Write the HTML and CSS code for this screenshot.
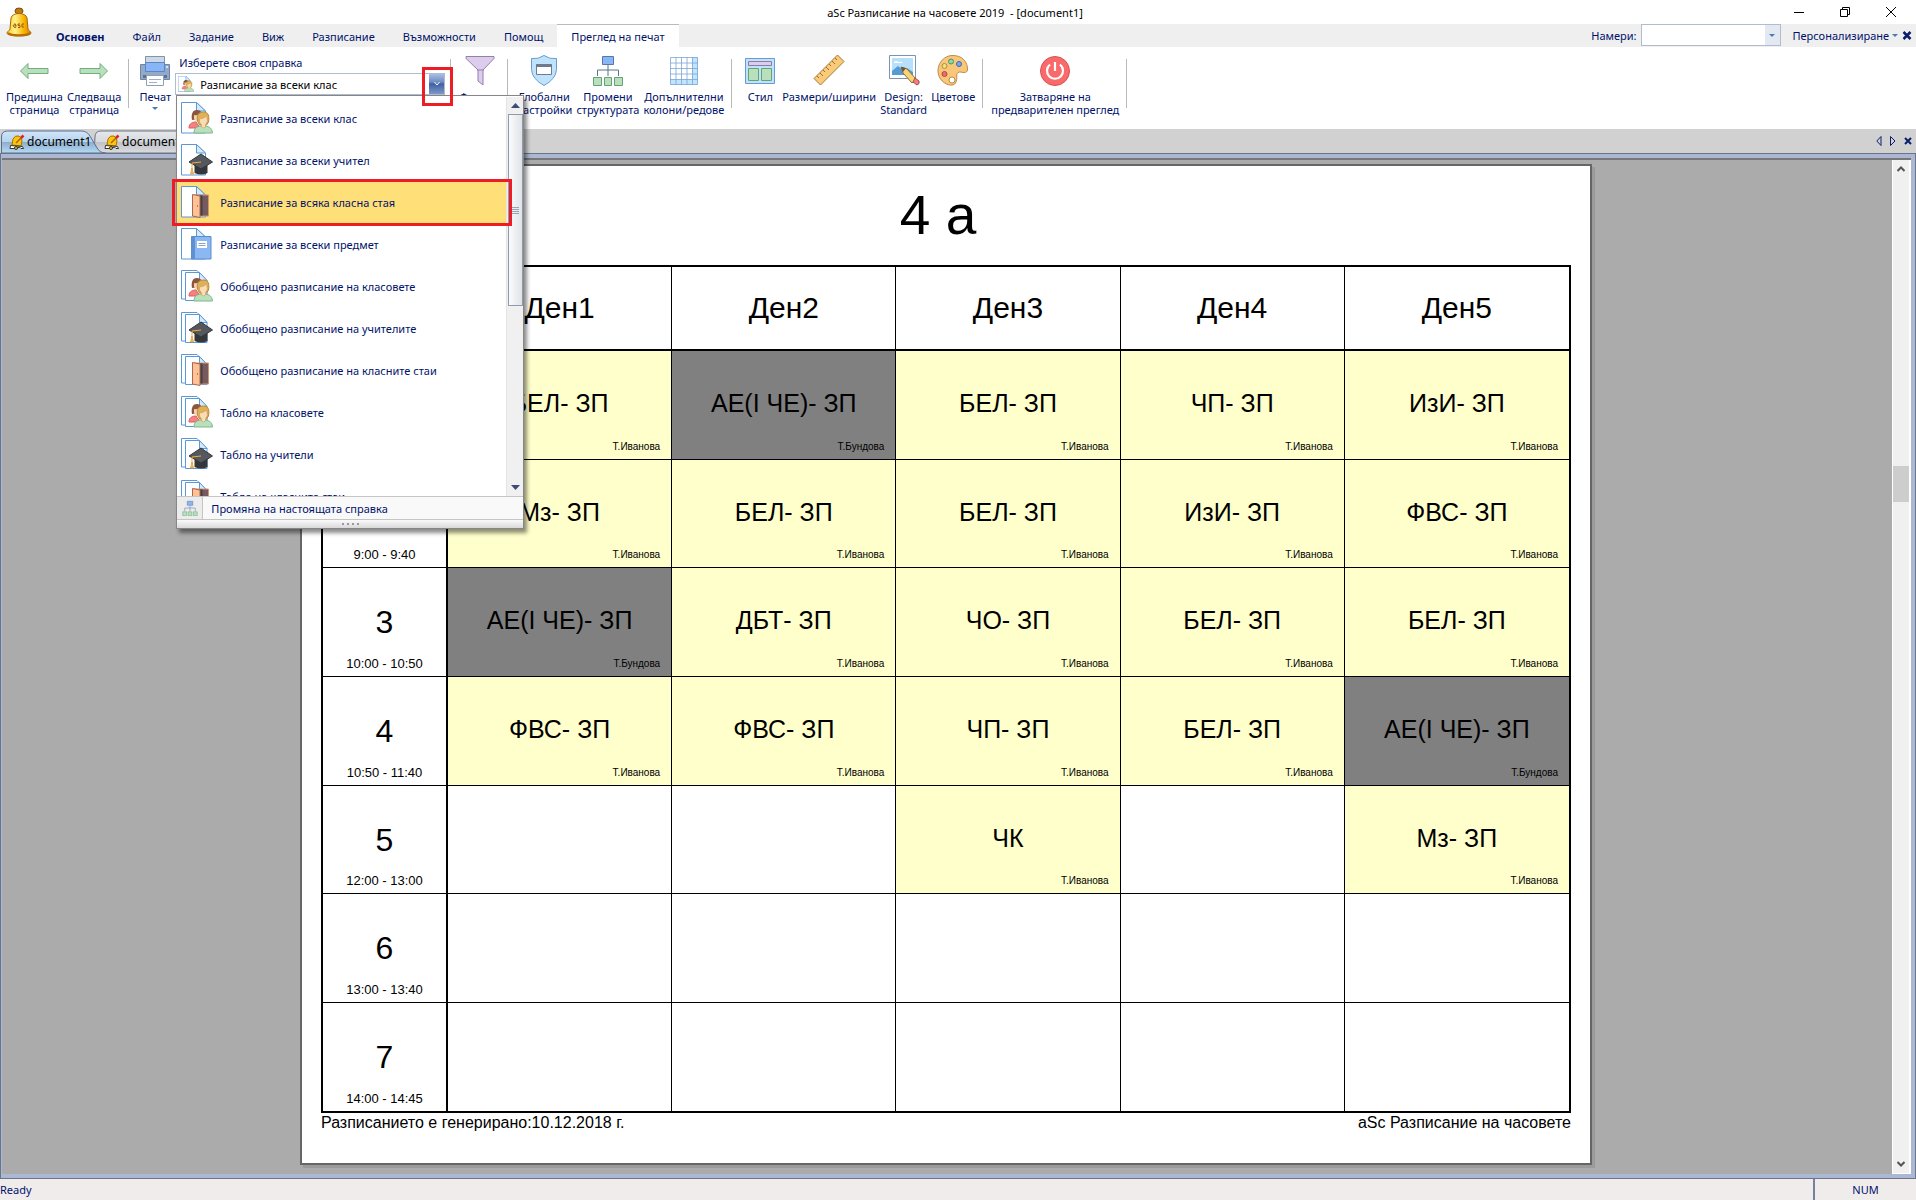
FILE: index.html
```html
<!DOCTYPE html>
<html lang="bg">
<head>
<meta charset="utf-8">
<title>aSc Разписание на часовете 2019 - [document1]</title>
<link rel="stylesheet" href="styles.css">
</head>
<body>
<svg class="sprite" aria-hidden="true">
  <defs>
    <linearGradient id="gold" x1="0" x2="1"><stop offset="0" stop-color="#ffd21c"/><stop offset=".35" stop-color="#fff08a"/><stop offset=".7" stop-color="#f7b500"/><stop offset="1" stop-color="#d88400"/></linearGradient>
  </defs>
  <symbol id="bell" viewBox="0 0 26 30">
    <ellipse cx="13" cy="4" rx="4" ry="3" fill="#c07a10" stroke="#7a4a08"/>
    <path d="M5 11C6 5 20 5 21 11l1 11c0 2 3 2 3 4 0 4-24 4-24 0 0-2 3-2 3-4z" fill="url(#gold)" stroke="#a86606"/>
    <path d="M2 26c3 3 19 3 22 0" fill="none" stroke="#b86c04" stroke-width="2"/>
    <path d="M8 17q2-1 2 2t-2 1 0-2h2M14 17h-2v1.500h2v2h-2M18 17h-2v3h2" fill="none" stroke="#9a5a10"/>
  </symbol>
  <symbol id="bellpen" viewBox="0 0 16 16">
    <path d="M3 11l1-6q2-4 6-3 3 2 3 5l-1 5z" fill="#fbc50c" stroke="#a87000"/>
    <path d="M1.500 11.500l12 1 1 2H12q-1-2-3-1-3 0-4 1H1z" fill="#fff" stroke="#333"/>
    <circle cx="7" cy="14" r="1.500" fill="#fbc50c" stroke="#333"/>
    <path d="M7 9l5-5" stroke="#b06010" stroke-width="1.500"/><path d="M12 4l2.500-2.500" stroke="#e8201c" stroke-width="2.500"/>
  </symbol>
  <symbol id="page" viewBox="0 0 32 32">
    <path d="M1 .5h14.500L24.500 9v22H.500V.500z" fill="#fff" stroke="#5b98d6"/>
    <path d="M15.500.500V9h9z" fill="#d5ebfd" stroke="#5b98d6"/>
  </symbol>
  <symbol id="pages" viewBox="0 0 32 32">
    <path d="M.5.500H16l5 5V29H.500z" fill="#fff" stroke="#5b98d6"/>
    <path d="M4.500 2.500H18.500l7.500 8v20H4.500z" fill="#fff" stroke="#5b98d6"/>
    <path d="M18.500 2.500v8H26z" fill="#d5ebfd" stroke="#5b98d6"/>
  </symbol>
  <symbol id="people" viewBox="0 0 32 32">
    <path d="M8 26c0-5 4-6 7-6l4 6z" fill="#f98080" stroke="#d86060"/>
    <path d="M11 18c-1-5 0-10 5-10 4 0 6 3 5 9z" fill="#8a5640"/>
    <path d="M13 13q3 1 5-1l1 5-3 3-3-3z" fill="#f5d3ae"/>
    <path d="M13 31c0-6 4-7 9-7s9 1 9.500 7z" fill="#b9dfbd" stroke="#7fb889"/>
    <path d="M16.500 19c-1-6 1-9 6-9s6 4 5 10l-2 3h-7z" fill="#e0b055" stroke="#b98a3c"/>
    <path d="M18.500 17q4 0 7-3l1 5-2 4v2q-2 2-4 0v-2l-2-3z" fill="#fadcb6" stroke="#c79a5a" stroke-width=".6"/>
  </symbol>
  <symbol id="cap" viewBox="0 0 32 32">
    <path d="M13.500 18h13v11q-6 3-13 0z" fill="#33363b"/>
    <path d="M20 10l11.500 8L20 25 8 18z" fill="#55585d" stroke="#33363b"/>
    <path d="M20 18l-9 1v7" fill="none" stroke="#f2ab3c"/><path d="M11 24l-1.500 6h3z" fill="#f7b955" stroke="#d99022" stroke-width=".6"/>
  </symbol>
  <symbol id="door" viewBox="0 0 32 32">
    <path d="M12 9h15.500v21H12z" fill="#765a5e" stroke="#cf9670"/>
    <path d="M19 9.500h2.500v20H19z" fill="#473f43"/>
    <path d="M11.500 8.500L19 10v21.500l-7.500-1.500z" fill="#ffc198" stroke="#a86a4a"/><path d="M16.500 19v2" stroke="#c57545"/>
  </symbol>
  <symbol id="book" viewBox="0 0 32 32">
    <path d="M10.500 8.500h19.500v22.500H10.500z" fill="#8bb8f2" stroke="#5a8ccb"/><path d="M10.500 8.500H14v22.500h-3.500z" fill="#5e91d2"/>
    <path d="M16 13h10v7H16z" fill="#fff" /><path d="M17.500 15.500h7M17.500 17.500h7" stroke="#8aa6c8"/>
  </symbol>
  <symbol id="org" viewBox="0 0 32 32">
    <path d="M16 11v5M5.500 22v-6h21v6M16 16v6" fill="none" stroke="#5d7290"/>
    <path d="M10.500 2.500h11v8h-11z" fill="#8ab6f5" stroke="#5377ae"/>
    <path d="M1.500 23.500h8v8h-8zM12.500 23.500h7v8h-7zM22.500 23.500h8v8h-8z" fill="#b9dfbd" stroke="#63a477"/>
  </symbol>
</svg>

<div class="app">
  <header class="titlebar">
    <svg class="logo"><use href="#bell"/></svg>
    <h1 class="title">aSc Разписание на часовете 2019 &nbsp;- [document1]</h1>
    <div class="winctl">
      <button aria-label="Minimize"><svg viewBox="0 0 12 12"><path d="M1 6.500h10"/></svg></button>
      <button aria-label="Restore"><svg viewBox="0 0 12 12"><path d="M1.500 3.500h7v7h-7zM3.500 3V1.500h7v7H9"/></svg></button>
      <button aria-label="Close"><svg viewBox="0 0 12 12"><path d="M1 1l10 10M11 1L1 11"/></svg></button>
    </div>
  </header>

  <nav class="menubar">
    <button class="main">Основен</button><button>Файл</button><button>Задание</button><button>Виж</button><button>Разписание</button><button>Възможности</button><button>Помощ</button><button class="active">Преглед на печат</button>
    <div class="tools">
      <label for="find">Намери:</label>
      <span class="find"><input id="find" type="text"><button aria-label="Търсене"><i class="tri"></i></button></span>
      <button class="customize">Персонализиране <i class="tri"></i></button>
      <button class="closedoc" aria-label="Затвори"><svg viewBox="0 0 10 9"><path d="M1.500 1l7 7M8.500 1l-7 7" stroke="#0a1f6b" stroke-width="2.500"/></svg></button>
    </div>
  </nav>

  <div class="ribbon">
    <button class="tool"><svg viewBox="0 0 32 32"><path d="M2.500 17L10 9.500v5h20v5H10v5z" fill="#b9dfbd" stroke="#6fae7f"/></svg>Предишна<br>страница</button>
    <button class="tool"><svg viewBox="0 0 32 32"><path d="M29.500 17L22 9.500v5H2v5h20v5z" fill="#b9dfbd" stroke="#6fae7f"/></svg>Следваща<br>страница</button>
    <i class="sep"></i>
    <button class="tool"><svg viewBox="0 0 32 32"><path d="M6.500 2.500h19v8h-19z" fill="#ccd8e5" stroke="#7f93ab"/><path d="M1.500 10.500h29v15h-29z" fill="#93a9c6" stroke="#6c86a8"/><path d="M6.500 8.500h19v9h-19z" fill="#87b5f5" stroke="#5a86c8"/><circle cx="28" cy="13" r="1" fill="#eaf3ff"/><path d="M4 21h24v3H4z" fill="#5c7494"/><path d="M7.500 21.500h17v10h-17z" fill="#fff" stroke="#8fa0b5"/><path d="M10 25.500h12M10 28.500h8" stroke="#9eb0c6"/></svg>Печат<i class="tri"></i></button>
    <div class="report">
      <label for="report">Изберете своя справка</label>
      <div class="combo">
        <svg class="comboicon"><use href="#page"/><use href="#people"/></svg>
        <select id="report"><option>Разписание за всеки клас</option><option>Разписание за всеки учител</option></select>
        <span class="drop"><svg viewBox="0 0 8 6"><path d="M1.500 1L4 4l2.500-3" fill="none" stroke="#fff"/></svg></span>
        <div class="mark markdrop"></div>
        <div class="popup">
          <div class="list">
            <ul>
              <li><button><svg><use href="#page"/><use href="#people"/></svg>Разписание за всеки клас</button></li>
              <li><button><svg><use href="#page"/><use href="#cap"/></svg>Разписание за всеки учител</button></li>
              <li><button class="on"><svg><use href="#page"/><use href="#door"/></svg>Разписание за всяка класна стая</button><div class="mark markitem"></div></li>
              <li><button><svg><use href="#page"/><use href="#book"/></svg>Разписание за всеки предмет</button></li>
              <li><button><svg><use href="#pages"/><use href="#people"/></svg>Обобщено разписание на класовете</button></li>
              <li><button><svg><use href="#pages"/><use href="#cap"/></svg>Обобщено разписание на учителите</button></li>
              <li><button><svg><use href="#pages"/><use href="#door"/></svg>Обобщено разписание на класните стаи</button></li>
              <li><button><svg><use href="#pages"/><use href="#people"/></svg>Табло на класовете</button></li>
              <li><button><svg><use href="#pages"/><use href="#cap"/></svg>Табло на учители</button></li>
              <li class="cut"><button><svg><use href="#pages"/><use href="#door"/></svg>Табло на класните стаи</button></li>
            </ul>
            <div class="bar">
              <svg viewBox="0 0 9 5"><path d="M4.500 0L9 5H0z" fill="#3c4c78"/></svg>
              <div class="thumb"><i></i></div>
              <svg viewBox="0 0 9 5"><path d="M4.500 5L0 0h9z" fill="#3c4c78"/></svg>
            </div>
          </div>
          <button class="change"><span><svg viewBox="0 0 32 32"><use href="#org"/></svg></span>Промяна на настоящата справка</button>
          <div class="grip"><i></i><i></i><i></i><i></i></div>
        </div>
      </div>
    </div>
    <i class="sep"></i>
    <button class="tool"><svg viewBox="0 0 32 32"><path d="M2 2.500h28v2L19 16v15l-5-4V16L2 4.500z" fill="#dccdec" stroke="#957fae"/><path d="M13 16h7" stroke="#957fae"/></svg>Филтър</button>
    <i class="sep"></i>
    <button class="tool"><svg viewBox="0 0 32 32"><path d="M16 1.500q6 4 12.500 3v11Q28 25 16 31.500 4 25 3.500 15.500v-11q6.500 1 12.500-3z" fill="#bfe3fb" stroke="#6a9bd0"/><path d="M8.500 10.500h15v10h-15z" fill="#fff" stroke="#6d7b8c"/><path d="M8.500 10h15v3h-15z" fill="#6d7b8c"/></svg>Глобални<br>настройки</button>
    <button class="tool"><svg><use href="#org"/></svg>Промени<br>структурата</button>
    <button class="tool"><svg viewBox="0 0 32 32"><path d="M2.500 3.500h27v27h-27z" fill="#fff"/><path d="M24 3h6v28H2v-6h22z" fill="#bfe5ff"/><path d="M2.500 3.500h27v27h-27zM8 3v28M13.500 3v28M19 3v28M24.500 3v28M2 9h28M2 14.500h28M2 20h28M2 25.500h28" fill="none" stroke="#7fa5d8" stroke-width=".8"/></svg>Допълнителни<br>колони/редове</button>
    <i class="sep wide"></i>
    <button class="tool"><svg viewBox="0 0 32 32"><path d="M1.500 4.500h29v25h-29z" fill="#bfe3fb" stroke="#6a9bd0"/><path d="M4.500 7.500h23v4h-23z" fill="#dccdec" stroke="#8d78ac"/><path d="M4.500 14.500h10v12h-10zM17.500 14.500h10v12h-10z" fill="#b9dfbd" stroke="#63a477"/></svg>Стил</button>
    <button class="tool"><svg viewBox="0 0 32 32"><path d="M24.500 1L31 7.500 7.500 31 1 24.500z" fill="#f8ca7a" stroke="#a87a3a"/><path d="M4 22l2 2M7 19l3 3M10 16l2 2M13 13l3 3M16 10l2 2M19 7l3 3M22 4l2 2" stroke="#a06a30"/></svg>Размери/ширини</button>
    <button class="tool"><svg viewBox="0 0 32 32"><path d="M1.500 1.500h26v23h-26z" fill="#fff" stroke="#7c93b3"/><path d="M4 4h21v17H4z" fill="#b7e0fb"/><path d="M4 17l6-5 5 4 4-2 6 4v3H4z" fill="#569bd8"/><path d="M6 8q2-2 4 0 3-1 5 1H6z" fill="#fff"/><path d="M13 13l6 2 9 10-4 4-9-10z" fill="#f9d577" stroke="#8e6e2e"/><path d="M13 13l5 1-3 4z" fill="#6b5440"/><path d="M27 24l4 3q1 3-2 4l-4-3z" fill="#f08080" stroke="#a64a4a"/></svg>Design:<br>Standard</button>
    <button class="tool"><svg viewBox="0 0 32 32"><path d="M15 1.500C25 1 31 8 30.500 16c-1 4-5 2-8 2-5 1-1 6-4 11-2 4-11 2-15-4C-3 15 4 2 15 1.500z" fill="#f8c77a" stroke="#c08a48"/><circle cx="14" cy="7.500" r="2.500" fill="#8fd6a3" stroke="#4b9465"/><circle cx="22" cy="10" r="2.500" fill="#78a8f0" stroke="#4169ab"/><circle cx="7.500" cy="12" r="2.500" fill="#f5e07e" stroke="#a8903c"/><circle cx="7.500" cy="20" r="2.500" fill="#f06b6b" stroke="#b84444"/><circle cx="15" cy="26" r="3" fill="#fff" stroke="#c08a48"/></svg>Цветове</button>
    <i class="sep"></i>
    <button class="tool"><svg viewBox="0 0 32 32"><circle cx="16" cy="17" r="14.500" fill="#f96b6b" stroke="#d94f52"/><path d="M11 10.500a8 8 0 1 0 10 0M16 8v9" fill="none" stroke="#fff" stroke-width="2.200"/></svg>Затваряне на<br>предварителен преглед</button>
    <i class="sep"></i>
  </div>

  <div class="doctabs">
    <svg class="shape" viewBox="0 0 260 24">
      <defs>
        <linearGradient id="ta" y2="1" x2="0"><stop offset="0" stop-color="#d3e4f8"/><stop offset=".5" stop-color="#b4d3ef"/><stop offset=".52" stop-color="#8fadcb"/><stop offset="1" stop-color="#b5dcf5"/></linearGradient>
        <linearGradient id="tb" y2="1" x2="0"><stop offset="0" stop-color="#e6e8ec"/><stop offset=".5" stop-color="#d5d8dc"/><stop offset=".52" stop-color="#bfc2c7"/><stop offset="1" stop-color="#dadcdf"/></linearGradient>
      </defs>
      <path d="M90 24q5-4 5-16 0-6 6-6h76q6 0 8 4l10 18z" fill="url(#tb)" stroke="#6d7480"/>
      <path d="M1.500 24V8q0-6 6-6h74q6 0 9 6l6 10q3 6 9 6z" fill="url(#ta)" stroke="#55708f"/>
    </svg>
    <button><svg><use href="#bellpen"/></svg>document1</button>
    <button><svg><use href="#bellpen"/></svg>document2</button>
    <div class="tabctl">
      <button aria-label="Предишен"><svg viewBox="0 0 6 10"><path d="M5 .5v9L.800 5z"/></svg></button>
      <button aria-label="Следващ"><svg viewBox="0 0 6 10"><path d="M.5.500v9L5 5z"/></svg></button>
      <button aria-label="Затвори"><svg viewBox="0 0 8 8"><path d="M1 1l6 6M7 1L1 7" stroke-width="2"/></svg></button>
    </div>
  </div>

  <main class="frame">
    <div class="canvas">
      <article class="paper">
        <h2>4 а</h2>
        <table>
          <colgroup><col class="hours"><col><col><col><col><col></colgroup>
          <thead><tr><td></td><th>Ден1</th><th>Ден2</th><th>Ден3</th><th>Ден4</th><th>Ден5</th></tr></thead>
          <tbody>
            <tr><th>1</th><td class="y"><b>БЕЛ- ЗП</b><small>Т.Иванова</small></td><td class="g"><b>АЕ(I ЧЕ)- ЗП</b><small>Т.Бундова</small></td><td class="y"><b>БЕЛ- ЗП</b><small>Т.Иванова</small></td><td class="y"><b>ЧП- ЗП</b><small>Т.Иванова</small></td><td class="y"><b>ИзИ- ЗП</b><small>Т.Иванова</small></td></tr>
            <tr><th>2<time>9:00 - 9:40</time></th><td class="y"><b>Мз- ЗП</b><small>Т.Иванова</small></td><td class="y"><b>БЕЛ- ЗП</b><small>Т.Иванова</small></td><td class="y"><b>БЕЛ- ЗП</b><small>Т.Иванова</small></td><td class="y"><b>ИзИ- ЗП</b><small>Т.Иванова</small></td><td class="y"><b>ФВС- ЗП</b><small>Т.Иванова</small></td></tr>
            <tr><th>3<time>10:00 - 10:50</time></th><td class="g"><b>АЕ(I ЧЕ)- ЗП</b><small>Т.Бундова</small></td><td class="y"><b>ДБТ- ЗП</b><small>Т.Иванова</small></td><td class="y"><b>ЧО- ЗП</b><small>Т.Иванова</small></td><td class="y"><b>БЕЛ- ЗП</b><small>Т.Иванова</small></td><td class="y"><b>БЕЛ- ЗП</b><small>Т.Иванова</small></td></tr>
            <tr><th>4<time>10:50 - 11:40</time></th><td class="y"><b>ФВС- ЗП</b><small>Т.Иванова</small></td><td class="y"><b>ФВС- ЗП</b><small>Т.Иванова</small></td><td class="y"><b>ЧП- ЗП</b><small>Т.Иванова</small></td><td class="y"><b>БЕЛ- ЗП</b><small>Т.Иванова</small></td><td class="g"><b>АЕ(I ЧЕ)- ЗП</b><small>Т.Бундова</small></td></tr>
            <tr><th>5<time>12:00 - 13:00</time></th><td></td><td></td><td class="y"><b>ЧК</b><small>Т.Иванова</small></td><td></td><td class="y"><b>Мз- ЗП</b><small>Т.Иванова</small></td></tr>
            <tr><th>6<time>13:00 - 13:40</time></th><td></td><td></td><td></td><td></td><td></td></tr>
            <tr><th>7<time>14:00 - 14:45</time></th><td></td><td></td><td></td><td></td><td></td></tr>
          </tbody>
        </table>
        <footer><span>Разписанието е генерирано:10.12.2018 г.</span><span>aSc Разписание на часовете</span></footer>
      </article>
    </div>
    <div class="vscroll">
      <svg viewBox="0 0 8 6"><path d="M.5 5L4 1.500 7.500 5"/></svg>
      <i></i>
      <svg viewBox="0 0 8 6"><path d="M.5 1L4 4.500 7.500 1"/></svg>
    </div>
  </main>

  <footer class="status"><span>Ready</span><span class="num">NUM</span></footer>
</div>
</body>
</html>
```
FILE: styles.css
```css
* { box-sizing: border-box; }
body { margin: 0; font: 11px/13px "Noto Sans", "Open Sans", sans-serif; color: #00126b; background: #fff; }
button { font: inherit; color: inherit; border: 0; background: none; padding: 0; }
svg { display: block; fill: none; }
.sprite { position: absolute; width: 0; height: 0; }
.app { display: flex; flex-direction: column; min-height: 100vh; }

.tri { display: inline-block; border: 3px solid transparent; border-top-color: #4a78b8; border-bottom: 0; }

/* title bar */
.titlebar { position: relative; display: flex; height: 24px; align-items: center; }
.logo { position: absolute; left: 6px; top: 7px; width: 26px; height: 30px; z-index: 2; }
.title { flex: 1; margin: 0; padding-left: 158px; text-align: center; font-size: 11px; font-weight: 400; color: #000; }
.winctl { display: flex; gap: 34px; width: 164px; justify-content: flex-end; padding-right: 19px; }
.winctl svg { width: 12px; height: 12px; stroke: #000; }

/* menu bar */
.menubar { display: flex; height: 23px; background: #efefef; padding-left: 42px; }
.menubar > button { padding: 1px 14px 0; }
.menubar > .active { background: #fff; border-top: 1px solid #bbb; padding-top: 0; }
.menubar > .main { font-weight: 700; }
.tools { display: flex; align-items: center; margin-left: auto; padding-right: 4px; }
.find { display: flex; width: 140px; height: 22px; margin: 0 12px 1px 4px; border: 1px solid #b0bccf; background: #fff; }
.find input { flex: 1; min-width: 0; border: 0; padding: 0 4px; font: inherit; }
.find button { width: 15px; background: #e4e8f1; }
.find .tri, .customize .tri { vertical-align: 3px; }
.closedoc { margin-left: 4px; }
.closedoc svg { width: 10px; height: 9px; }

/* ribbon */
.ribbon { display: flex; height: 82px; padding-left: 4px; white-space: nowrap; }
.tool { display: flex; flex-direction: column; align-items: center; min-width: 40px; padding: 7px 2px 0; text-align: center; }
.tool svg { width: 32px; height: 32px; margin-bottom: 4px; }
.tool .tri { margin-top: 4px; }
.sep { width: 1px; height: 49px; margin: 12px 6px 0 5px; background: #b9b9b9; }
.wide { margin-right: 8px; }
.report { width: 270px; padding-top: 9px; }
.report label { display: block; padding-left: 4px; margin-bottom: 4px; }
.combo { position: relative; height: 22px; border: 1px solid #b0bccf; display: flex; }
.combo select { flex: 1; appearance: none; border: 0; background: #fff; padding: 0 0 0 24px; font: inherit; color: #000; }
.comboicon { position: absolute; left: 2px; top: 2px; width: 16px; height: 16px; }
.drop { width: 15px; background: linear-gradient(#a9bde4, #6f8cc4 40%, #3f62a2 50%, #7d98cb); display: grid; place-items: center; }
.drop svg { width: 8px; height: 6px; }
.mark { position: absolute; border: 3px solid #ee1c25; z-index: 4; }
.markdrop { left: 246px; top: -7px; width: 31px; height: 39px; }

/* report list */
.popup { position: absolute; left: 0; top: 21px; width: 348px; z-index: 3; background: #fff; border: 1px solid #868686; box-shadow: 3px 4px 4px rgba(0, 0, 0, .45); color: #00126b; }
.list { display: flex; height: 401px; padding-top: 1px; border-bottom: 1px solid #c5c5c5; }
.list ul { flex: 1; margin: 0; padding: 0; list-style: none; }
.list li { position: relative; height: 42px; }
.list .cut { height: 21px; overflow: hidden; }
.list li button { display: flex; width: 100%; height: 42px; align-items: center; padding-left: 4px; gap: 7px; }
.list li svg { width: 32px; height: 32px; }
.list .on { background: #ffdf77; }
.markitem { left: -5px; top: -2px; right: -6px; height: 47px; }
.bar { display: flex; flex-direction: column; align-items: center; width: 17px; background: #f0f0f0; padding: 6px 1px; border-left: 1px solid #e4e4e4; }
.bar > svg { width: 9px; height: 5px; }
.thumb { display: grid; place-items: center; width: 15px; height: 192px; margin: 6px 0 auto; border: 1px solid #8f9aad; background: linear-gradient(90deg, #fafbfc, #dfe3e8); }
.thumb i { width: 7px; height: 7px; background: repeating-linear-gradient(#9aa3b3 0 1px, transparent 1px 2px); }
.change { display: flex; align-items: center; gap: 8px; width: 100%; height: 23px; background: #f9f9f9; border-bottom: 1px solid #c5c5c5; }
.change span { width: 26px; height: 22px; padding: 3px 5px; background: #ececec; border-right: 1px solid #c5c5c5; }
.change svg { width: 16px; height: 16px; }
.grip { display: flex; gap: 3px; justify-content: center; align-items: center; height: 8px; background: linear-gradient(#fafafa, #d9d9d9); }
.grip i { width: 2px; height: 2px; background: #999; }

/* document tabs */
.doctabs { position: relative; display: flex; height: 24px; background: #d1d1d1; font-size: 12px; color: #000; padding-left: 9px; }
.shape { position: absolute; left: 0; top: 0; width: 260px; height: 24px; }
.doctabs > button { position: relative; display: flex; align-items: center; gap: 2px; width: 95px; padding-top: 1px; }
.doctabs > button svg { width: 16px; height: 16px; }
.tabctl { display: flex; gap: 8px; align-items: center; margin-left: auto; padding-right: 4px; }
.tabctl svg { width: 6px; height: 10px; stroke: #0a1f6b; }
.tabctl button:last-child svg { width: 8px; height: 8px; }

/* preview */
.frame { flex: 1; display: flex; border: solid #abb8d3; border-width: 5px 5px 5px 2px; box-shadow: inset 0 2px #777, inset 1px 0 #777; outline: 1px solid #6b7488; outline-offset: -1px; padding: 2px 0 0; }
.canvas { flex: 1; background: #ababab; padding: 4px 300px 7px 298px; }
.paper { background: #fff; border: 2px solid #666; box-shadow: 3px 3px #9b9b9b; padding: 0 19px 30px; color: #000; font: 16px/20px "Liberation Sans", Arial, sans-serif; }
.paper h2 { margin: 0; height: 99px; font-size: 55px; line-height: 99px; font-weight: 400; text-align: center; padding-right: 16px; }
.paper table { width: 100%; table-layout: fixed; border-spacing: 0; border: 2px solid #000; }
.hours { width: 125px; }
.paper td, .paper th { position: relative; padding: 0; font-weight: 400; text-align: center; border: 0 solid #000; border-width: 0 1px 1px 0; }
.paper tr > :first-child { border-right-width: 2px; }
.paper tr > :last-child { border-right-width: 0; }
.paper thead th, .paper thead td { height: 84px; border-bottom-width: 2px; font-size: 30px; }
.paper tbody tr { height: 109px; }
.paper tbody tr:nth-child(3n + 2), .paper tbody tr:last-child { height: 108px; }
.paper tbody tr:last-child > * { border-bottom-width: 0; }
.paper tbody th { font-size: 32px; }
.paper time { position: absolute; left: 0; right: 0; bottom: 3px; font-size: 13px; line-height: 18px; }
.paper b { font-size: 25px; font-weight: 400; }
.paper small { position: absolute; right: 11px; bottom: 5px; font-size: 10px; line-height: 14px; }
.paper .y { background: #ffc; }
.paper .g { background: gray; }
.paper footer { display: flex; justify-content: space-between; }
.vscroll { display: flex; flex-direction: column; align-items: center; justify-content: space-between; width: 19px; background: #f0f0f0; border: solid #fff; border-width: 0 2px 1px 1px; padding: 6px 0; }
.vscroll svg { width: 8px; height: 6px; stroke: #555; stroke-width: 2; }
.vscroll i { width: 16px; height: 36px; margin: 294px 0 auto; background: #cdcdcd; }

/* status bar */
.status { display: flex; justify-content: space-between; align-items: center; height: 21px; background: #f0ecec; }
.num { width: 103px; height: 21px; border-left: 2px solid #75829f; text-align: center; line-height: 21px; }
```
